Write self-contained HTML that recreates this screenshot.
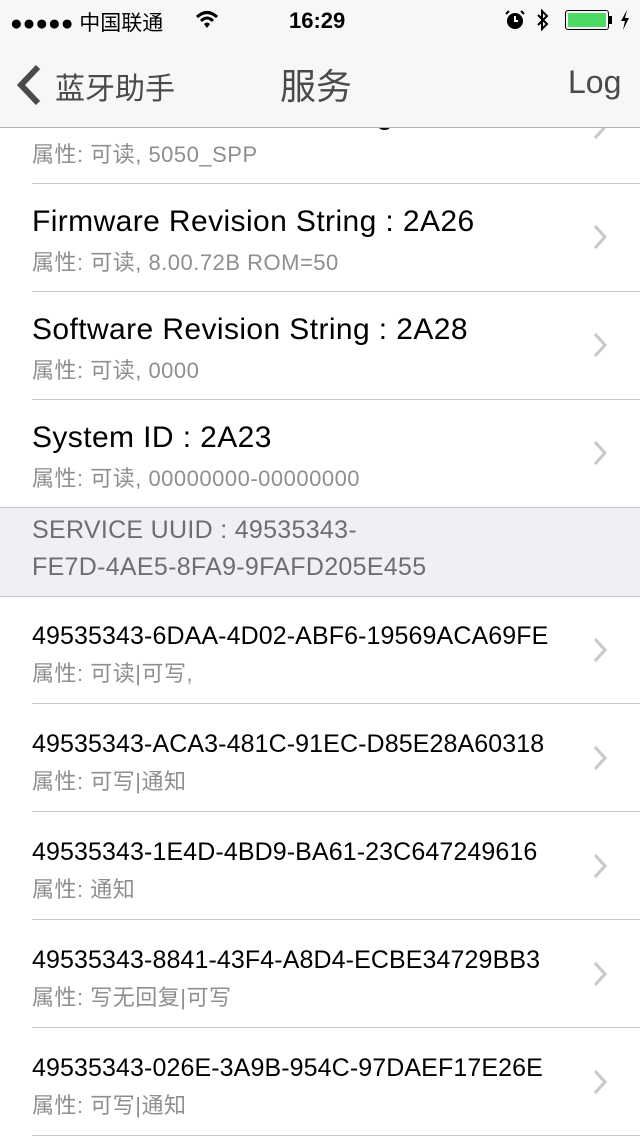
<!DOCTYPE html>
<html><head><meta charset="utf-8"><style>
*{margin:0;padding:0;box-sizing:border-box}
body{width:640px;height:1136px;position:relative;overflow:hidden;background:#fff;font-family:"Liberation Sans","Noto Sans CJK SC",sans-serif}
.a{position:absolute;white-space:nowrap}
.sep{position:absolute;left:32px;right:0;height:1px;background:#c8c7cc}
.t1{font-size:30px;color:#000;left:32px;letter-spacing:0.4px}
.t2{font-size:22px;color:#8e8e93;left:32px;letter-spacing:0.5px}
.t3{font-size:25px;color:#000;left:32px;letter-spacing:0.1px}
.chev{position:absolute;left:590px;width:20px;height:30px}
</style></head><body>
<div class="a t1" style="top:98px">Manufacturer Name String</div>
<div class="a t2" style="top:137px">属性: 可读, 5050_SPP</div>
<svg class="chev" style="top:112px" viewBox="0 0 20 30"><path d="M5 4 L15 15 L5 26" fill="none" stroke="#c7c7cc" stroke-width="3"/></svg>
<div class="sep" style="top:183px"></div>

<div class="a t1" style="top:205px">Firmware Revision String : 2A26</div>
<div class="a t2" style="top:245px">属性: 可读, 8.00.72B ROM=50</div>
<svg class="chev" style="top:222px" viewBox="0 0 20 30"><path d="M5 4 L15 15 L5 26" fill="none" stroke="#c7c7cc" stroke-width="3"/></svg>
<div class="sep" style="top:291px"></div>

<div class="a t1" style="top:313px">Software Revision String : 2A28</div>
<div class="a t2" style="top:353px">属性: 可读, 0000</div>
<svg class="chev" style="top:330px" viewBox="0 0 20 30"><path d="M5 4 L15 15 L5 26" fill="none" stroke="#c7c7cc" stroke-width="3"/></svg>
<div class="sep" style="top:399px"></div>

<div class="a t1" style="top:421px">System ID : 2A23</div>
<div class="a t2" style="top:461px">属性: 可读, 00000000-00000000</div>
<svg class="chev" style="top:438px" viewBox="0 0 20 30"><path d="M5 4 L15 15 L5 26" fill="none" stroke="#c7c7cc" stroke-width="3"/></svg>

<div class="a" style="left:0;top:507px;width:640px;height:90px;background:#efeff4;border-top:1px solid #c8c7cc;border-bottom:1px solid #c8c7cc"></div>
<div class="a" style="left:32px;top:512px;font-size:25px;color:#6d6d72;line-height:37px;letter-spacing:0.3px">SERVICE UUID : 49535343-<br>FE7D-4AE5-8FA9-9FAFD205E455</div>

<div class="a t3" style="top:622px">49535343-6DAA-4D02-ABF6-19569ACA69FE</div>
<div class="a t2" style="top:656px">属性: 可读|可写,</div>
<svg class="chev" style="top:635px" viewBox="0 0 20 30"><path d="M5 4 L15 15 L5 26" fill="none" stroke="#c7c7cc" stroke-width="3"/></svg>
<div class="sep" style="top:703px"></div>

<div class="a t3" style="top:730px">49535343-ACA3-481C-91EC-D85E28A60318</div>
<div class="a t2" style="top:764px">属性: 可写|通知</div>
<svg class="chev" style="top:743px" viewBox="0 0 20 30"><path d="M5 4 L15 15 L5 26" fill="none" stroke="#c7c7cc" stroke-width="3"/></svg>
<div class="sep" style="top:811px"></div>

<div class="a t3" style="top:838px">49535343-1E4D-4BD9-BA61-23C647249616</div>
<div class="a t2" style="top:872px">属性: 通知</div>
<svg class="chev" style="top:851px" viewBox="0 0 20 30"><path d="M5 4 L15 15 L5 26" fill="none" stroke="#c7c7cc" stroke-width="3"/></svg>
<div class="sep" style="top:919px"></div>

<div class="a t3" style="top:946px">49535343-8841-43F4-A8D4-ECBE34729BB3</div>
<div class="a t2" style="top:980px">属性: 写无回复|可写</div>
<svg class="chev" style="top:959px" viewBox="0 0 20 30"><path d="M5 4 L15 15 L5 26" fill="none" stroke="#c7c7cc" stroke-width="3"/></svg>
<div class="sep" style="top:1027px"></div>

<div class="a t3" style="top:1054px">49535343-026E-3A9B-954C-97DAEF17E26E</div>
<div class="a t2" style="top:1088px">属性: 可写|通知</div>
<svg class="chev" style="top:1067px" viewBox="0 0 20 30"><path d="M5 4 L15 15 L5 26" fill="none" stroke="#c7c7cc" stroke-width="3"/></svg>
<div class="sep" style="top:1135px"></div>

<!-- nav -->
<div class="a" style="left:0;top:0;width:640px;height:128px;background:#f7f7f7;border-bottom:1px solid #b2b2b2"></div>
<div class="a" style="left:10px;top:7px;font-size:21px;color:#000">●●●●● 中国联通</div>
<svg class="a" style="left:195px;top:10px" width="24" height="20" viewBox="0 0 24 20"><path d="M2 7 Q12 -2 22 7" fill="none" stroke="#000" stroke-width="3"/><path d="M6 11 Q12 5 18 11" fill="none" stroke="#000" stroke-width="3"/><path d="M9 14 L12 18 L15 14 Q12 11 9 14Z" fill="#000"/></svg>
<div class="a" style="left:289px;top:8px;font-size:22px;font-weight:bold;color:#000">16:29</div>
<svg class="a" style="left:504px;top:10px" width="22" height="20" viewBox="0 0 22 20"><circle cx="11" cy="11" r="8" fill="#000"/><path d="M11 6 V11 H14" stroke="#fff" stroke-width="2" fill="none"/><path d="M2 4 L5 1 M20 4 L17 1" stroke="#000" stroke-width="2"/></svg>
<svg class="a" style="left:535px;top:8px" width="16" height="24" viewBox="0 0 16 24"><path d="M3 7 L12 16 L7 21 V3 L12 8 L3 17" fill="none" stroke="#000" stroke-width="2"/></svg>
<div class="a" style="left:565px;top:10px;width:44px;height:20px;border:1.5px solid #000;border-radius:3px;padding:2px"><div style="width:100%;height:100%;background:#4cd964;border-radius:1px"></div></div>
<div class="a" style="left:609px;top:16px;width:3px;height:8px;background:#000"></div>
<svg class="a" style="left:619px;top:9px" width="12" height="22" viewBox="0 0 12 22"><path d="M8 1 L2 12 H6 L4 21 L10 9 H6 Z" fill="#000"/></svg>
<svg class="a" style="left:14px;top:64px" width="30" height="42" viewBox="0 0 30 42"><path d="M24 3 L7 21 L24 39" fill="none" stroke="#4a4a4a" stroke-width="6"/></svg>
<div class="a" style="left:55px;top:64px;font-size:30px;color:#4a4a4a">蓝牙助手</div>
<div class="a" style="left:280px;top:58px;font-size:36px;color:#4a4a4a">服务</div>
<div class="a" style="left:568px;top:64px;font-size:32px;color:#4a4a4a">Log</div>
</body></html>
